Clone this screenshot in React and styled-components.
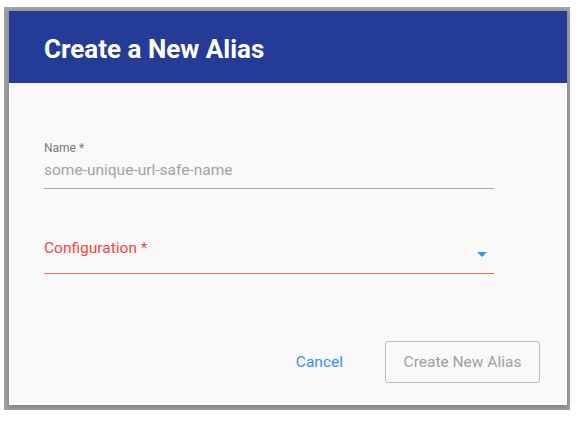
import React from "react";
import styled, { createGlobalStyle } from "styled-components";

const GlobalStyle = createGlobalStyle`
  body {
    margin: 0;
    background: #ffffff;
    font-family: Roboto, "Liberation Sans", sans-serif;
  }
`;

const Backdrop = styled.div`
  box-sizing: border-box;
  width: 566px;
  height: 403px;
  margin: 7px 0 0 4px;
  padding: 4px 3px 5px 5px;
  background: #a2a2a2;
`;

const Dialog = styled.div`
  box-sizing: border-box;
  height: 394px;
  display: flex;
  flex-direction: column;
  background: #f9f9f9;
  box-shadow: 0 2px 6px rgba(0, 0, 0, 0.25);
`;

const Header = styled.div`
  height: 72px;
  flex-shrink: 0;
  display: flex;
  align-items: center;
  padding: 4px 0 0 35px;
  box-sizing: border-box;
  background: #253c96;
`;

const Title = styled.h2`
  margin: 0;
  font-size: 26px;
  font-weight: 700;
  color: #ffffff;
`;

const Body = styled.div`
  padding: 58px 73px 0 35px;
  display: flex;
  flex-direction: column;
`;

const Field = styled.div`
  display: flex;
  flex-direction: column;
  margin-top: ${p => p.$top || 0}px;
`;

const Label = styled.label`
  font-size: 12px;
  line-height: 14px;
  color: #7a7a7a;
`;

const InputLine = styled.div`
  margin-top: 5px;
  padding-bottom: 8px;
  border-bottom: 1px solid #a8a8a8;
  font-size: 15.5px;
  line-height: 20px;
  color: #a3a3a3;
`;

const SelectLine = styled.div`
  display: flex;
  justify-content: space-between;
  padding-bottom: 15px;
  border-bottom: 1px solid #f56b63;
  font-size: 15.5px;
  line-height: 20px;
  color: #f4463f;
`;

const Caret = styled.svg`
  align-self: flex-end;
  margin: 0 7px 1px 0;
`;

const Actions = styled.div`
  margin-top: 67px;
  display: flex;
  justify-content: flex-end;
  align-items: center;
  gap: 42px;
  padding-right: 27px;
`;

const TextButton = styled.button`
  border: none;
  background: none;
  padding: 0;
  font-family: inherit;
  font-size: 15.5px;
  color: #3393f7;
  cursor: pointer;
`;

const OutlineButton = styled.button`
  box-sizing: border-box;
  width: 155px;
  height: 42px;
  border: 1px solid #bdbdbd;
  border-radius: 3px;
  background: transparent;
  font-family: inherit;
  font-size: 15.5px;
  color: #a0a0a0;
`;

export default function App() {
  return (
    <>
      <GlobalStyle />
      <Backdrop>
        <Dialog>
          <Header>
            <Title>Create a New Alias</Title>
          </Header>
          <Body>
            <Field>
              <Label>Name *</Label>
              <InputLine>some-unique-url-safe-name</InputLine>
            </Field>
            <Field $top={49}>
              <SelectLine>
                <span>Configuration *</span>
                <Caret width="10" height="5" viewBox="0 0 10 5">
                  <path d="M0 0h10L5 5z" fill="#3393f7" />
                </Caret>
              </SelectLine>
            </Field>
          </Body>
          <Actions>
            <TextButton>Cancel</TextButton>
            <OutlineButton disabled>Create New Alias</OutlineButton>
          </Actions>
        </Dialog>
      </Backdrop>
    </>
  );
}
